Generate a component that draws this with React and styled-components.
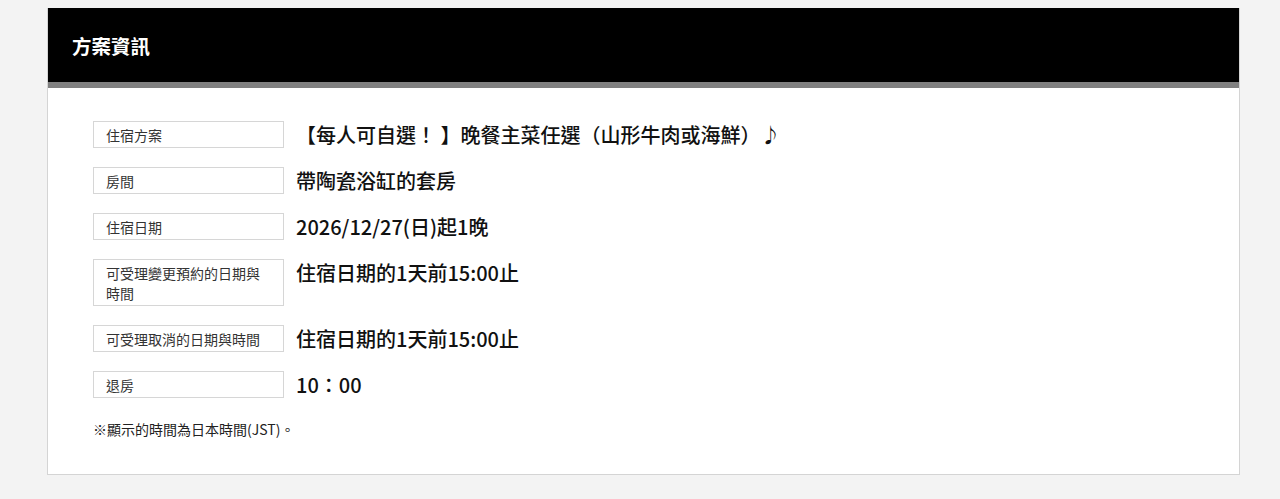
import React from "react";
import styled, { createGlobalStyle } from "styled-components";

const GlobalStyle = createGlobalStyle`
  body {
    margin: 0;
    background-color: #f3f3f3;
    font-family: "Noto Sans CJK TC", "Noto Sans", sans-serif;
  }
`;

const Page = styled.div`
  padding: 8px 40px 25px 47px;
`;

const Card = styled.section`
  background: #fff;
  border: 1px solid #d4d4d4;
  border-top: none;
`;

const Header = styled.div`
  height: 74px;
  background-color: #000;
  border-bottom: 6px solid #808080;
  display: flex;
  align-items: center;
  padding-left: 24px;
`;

const Title = styled.h2`
  margin: 0;
  color: #fff;
  font-size: 19.5px;
  font-weight: 700;
`;

const Body = styled.div`
  padding: 33px 45px 35px 45px;
`;

const InfoList = styled.dl`
  margin: 0;
  display: grid;
  grid-template-columns: 191px 1fr;
  column-gap: 12px;
  row-gap: 19px;
`;

const Label = styled.dt`
  border: 1px solid #d6d6d6;
  padding: 2.5px 12px;
  font-size: 14px;
  line-height: 20px;
  color: #333;
`;

const Value = styled.dd`
  margin: 0;
  font-size: 20px;
  font-weight: 500;
  line-height: 27px;
  color: #111;
`;

const Note = styled.p`
  margin: 21px 0 0;
  font-size: 14px;
  line-height: 20px;
  color: #222;
`;

const rows = [
  ["住宿方案", "【每人可自選！ 】晚餐主菜任選（山形牛肉或海鮮）♪"],
  ["房間", "帶陶瓷浴缸的套房"],
  ["住宿日期", "2026/12/27(日)起1晚"],
  ["可受理變更預約的日期與時間", "住宿日期的1天前15:00止"],
  ["可受理取消的日期與時間", "住宿日期的1天前15:00止"],
  ["退房", "10：00"],
];

export default function App() {
  return (
    <>
      <GlobalStyle />
      <Page>
        <Card>
          <Header>
            <Title>方案資訊</Title>
          </Header>
          <Body>
            <InfoList>
              {rows.map(([label, value]) => (
                <React.Fragment key={label}>
                  <Label>{label}</Label>
                  <Value>{value}</Value>
                </React.Fragment>
              ))}
            </InfoList>
            <Note>※顯示的時間為日本時間(JST)。</Note>
          </Body>
        </Card>
      </Page>
    </>
  );
}
